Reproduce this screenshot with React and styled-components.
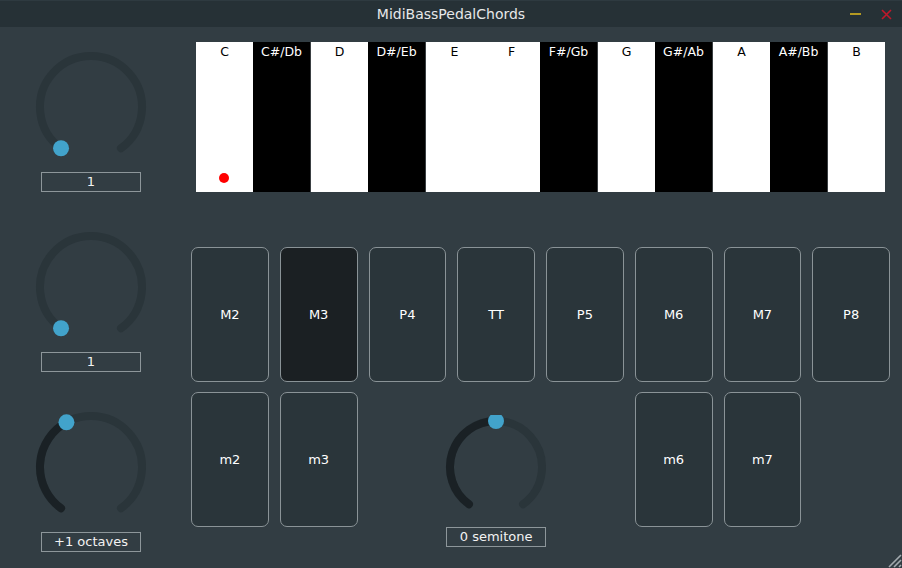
import styled, { createGlobalStyle } from 'styled-components';

const GlobalStyle = createGlobalStyle`
  html, body {
    margin: 0;
    padding: 0;
    background: #323d43;
  }
  body {
    font-family: 'DejaVu Sans', 'Liberation Sans', sans-serif;
    color: #ffffff;
  }
`;

const Window = styled.div`
  position: relative;
  width: 902px;
  height: 568px;
  background: #323d43;
  display: flex;
  flex-direction: column;
  overflow: hidden;
`;

const TitleBar = styled.header`
  height: 27px;
  flex: none;
  background: #263136;
  display: flex;
  align-items: center;
  justify-content: center;
  position: relative;
  font-size: 14px;
  color: #e6e8e9;
  border-top: 1px solid #2e3a40;
  box-sizing: border-box;
`;

const WindowButtons = styled.div`
  position: absolute;
  right: 10px;
  top: 0;
  height: 100%;
  display: flex;
  align-items: center;
  gap: 19px;
`;

const Body = styled.main`
  flex: 1;
  display: flex;
  gap: 9px;
`;

const KnobColumn = styled.section`
  width: 182px;
  flex: none;
  padding-top: 20px;
  display: flex;
  flex-direction: column;
  align-items: center;
  gap: 35px;
`;

const KnobGroup = styled.div`
  display: flex;
  flex-direction: column;
  align-items: center;
  gap: ${(p) => p.$gap || 5}px;
  padding-top: ${(p) => p.$top || 0}px;
`;

const KnobSvg = styled.svg`
  flex: none;
  display: block;
`;

const ValueBox = styled.div`
  flex: none;
  width: 100px;
  height: 20px;
  box-sizing: border-box;
  border: 1px solid #8d969a;
  font-size: 13px;
  line-height: 18px;
  text-align: center;
  color: #f2f2f2;
`;

const Main = styled.section`
  width: 699px;
  flex: none;
  padding-top: 15px;
  display: flex;
  flex-direction: column;
`;

const Keyboard = styled.div`
  margin: 0 5px;
  height: 150px;
  display: flex;
`;

const Key = styled.div`
  flex: 1;
  position: relative;
  background: ${(p) => (p.$black ? '#000000' : '#ffffff')};
  color: ${(p) => (p.$black ? '#ffffff' : '#000000')};
  border-right: ${(p) => (p.$black ? '1px solid #3a3f42' : 'none')};
  font-size: 12.5px;
  text-align: center;
  padding-top: 2px;
`;

const NoteDot = styled.span`
  position: absolute;
  left: 50%;
  bottom: 9px;
  width: 10px;
  height: 10px;
  margin-left: -6px;
  border-radius: 50%;
  background: #ff0000;
`;

const Pads = styled.div`
  margin-top: 55px;
  display: grid;
  grid-template-columns: repeat(8, 1fr);
  grid-template-rows: 135px 135px;
  column-gap: 11px;
  row-gap: 10px;
`;

const Pad = styled.button`
  grid-column: ${(p) => p.$col};
  grid-row: ${(p) => p.$row};
  background: ${(p) => (p.$on ? '#1b2023' : '#2a353a')};
  border: 1px solid #8a9397;
  border-radius: 7px;
  color: #ffffff;
  font-family: inherit;
  font-size: 13px;
  padding: 0;
`;

const PadKnob = styled.div`
  grid-column: 3 / 6;
  grid-row: 2;
  display: flex;
  justify-content: center;
  align-items: flex-start;
`;

const ResizeCorner = styled.svg`
  position: absolute;
  right: 0;
  bottom: 0;
`;

const keys = [
  ['C', false],
  ['C#/Db', true],
  ['D', false],
  ['D#/Eb', true],
  ['E', false],
  ['F', false],
  ['F#/Gb', true],
  ['G', false],
  ['G#/Ab', true],
  ['A', false],
  ['A#/Bb', true],
  ['B', false],
];

const topPads = ['M2', 'M3', 'P4', 'TT', 'P5', 'M6', 'M7', 'P8'];
const bottomPads = [
  ['m2', 1],
  ['m3', 2],
  ['m6', 6],
  ['m7', 7],
];

const START = -144;
const END = 144;

const polar = (c, r, deg) => {
  const a = (deg * Math.PI) / 180;
  return [c + r * Math.sin(a), c - r * Math.cos(a)];
};

const arc = (c, r, from, to) => {
  const [x0, y0] = polar(c, r, from);
  const [x1, y1] = polar(c, r, to);
  const large = to - from > 180 ? 1 : 0;
  return `M ${x0} ${y0} A ${r} ${r} 0 ${large} 1 ${x1} ${y1}`;
};

const Knob = ({ size, r, value }) => {
  const c = size / 2;
  const angle = START + (END - START) * value;
  const [tx, ty] = polar(c, r, angle);
  return (
    <KnobSvg width={size} height={size} viewBox={`0 0 ${size} ${size}`}>
      <path d={arc(c, r, START, END)} stroke='#2a353a' strokeWidth='8' fill='none' strokeLinecap='round' />
      {value > 0 && (
        <path d={arc(c, r, START, angle)} stroke='#1a2125' strokeWidth='8' fill='none' strokeLinecap='round' />
      )}
      <circle cx={tx} cy={ty} r='8' fill='#42a3cb' />
    </KnobSvg>
  );
};

const App = () => {
  return (
    <>
      <GlobalStyle />
      <Window>
        <TitleBar>
          MidiBassPedalChords
          <WindowButtons>
            <svg width='12' height='12' viewBox='0 0 12 12'>
              <rect x='0' y='5' width='11' height='2' fill='#b49a22' />
            </svg>
            <svg width='11' height='11' viewBox='0 0 11 11'>
              <path d='M1 1 L10 10 M10 1 L1 10' stroke='#c0182a' strokeWidth='1.6' />
            </svg>
          </WindowButtons>
        </TitleBar>
        <Body>
          <KnobColumn>
            <KnobGroup>
              <Knob size={120} r={51} value={0} />
              <ValueBox>1</ValueBox>
            </KnobGroup>
            <KnobGroup>
              <Knob size={120} r={51} value={0} />
              <ValueBox>1</ValueBox>
            </KnobGroup>
            <KnobGroup>
              <Knob size={120} r={51} value={0.4} />
              <ValueBox>+1 octaves</ValueBox>
            </KnobGroup>
          </KnobColumn>
          <Main>
            <Keyboard>
              {keys.map(([name, black], i) => (
                <Key key={name} $black={black}>
                  {name}
                  {i === 0 && <NoteDot />}
                </Key>
              ))}
            </Keyboard>
            <Pads>
              {topPads.map((name, i) => (
                <Pad key={name} $col={i + 1} $row={1} $on={name === 'M3'}>
                  {name}
                </Pad>
              ))}
              {bottomPads.map(([name, col]) => (
                <Pad key={name} $col={col} $row={2}>
                  {name}
                </Pad>
              ))}
              <PadKnob>
                <KnobGroup $top={23} $gap={8}>
                  <Knob size={104} r={46} value={0.5} />
                  <ValueBox>0 semitone</ValueBox>
                </KnobGroup>
              </PadKnob>
            </Pads>
          </Main>
        </Body>
        <ResizeCorner width='18' height='18' viewBox='0 0 18 18'>
          <path d='M17 5 L5 17 M17 10 L10 17 M17 15 L15 17' stroke='#a2aaae' strokeWidth='1.6' />
        </ResizeCorner>
      </Window>
    </>
  );
};

export default App;
